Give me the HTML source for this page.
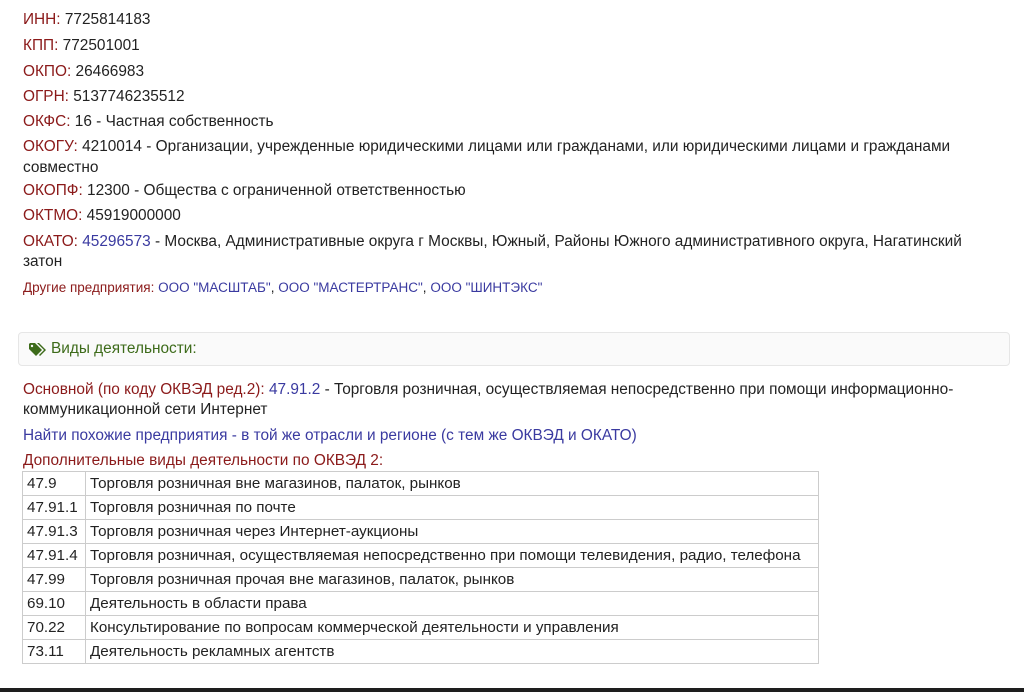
<!DOCTYPE html><html><head><meta charset="utf-8"><style>
body{margin:0;width:1024px;height:692px;overflow:hidden;background:#fff;font-family:"Liberation Sans",Arial,sans-serif;font-size:15.4px;color:#222;position:relative}
.l{position:absolute;left:23px;white-space:nowrap;line-height:20px}
.r{color:#8b1a1a}.b{color:#3a3aa0}.s{font-size:13.5px}
.panel{position:absolute;left:18px;top:332px;width:992px;height:34px;border:1px solid #e6e6e6;border-radius:4px;background:#fafafa;box-sizing:border-box}
.panel span{position:absolute;left:32px;top:7px;color:#3d6b1a}
table{position:absolute;left:22px;top:471px;border-collapse:collapse;width:797px;font-size:15.2px}
td{border:1px solid #ccc;height:23px;padding:0 4px;line-height:22px;white-space:nowrap}
td:first-child{width:54px}
.bar{position:absolute;left:0;top:688px;width:1024px;height:4px;background:#1e1e1e}
</style></head><body>
<div class="l" style="top:10px"><span class="r">ИНН:</span> 7725814183</div>
<div class="l" style="top:36px"><span class="r">КПП:</span> 772501001</div>
<div class="l" style="top:62px"><span class="r">ОКПО:</span> 26466983</div>
<div class="l" style="top:87px"><span class="r">ОГРН:</span> 5137746235512</div>
<div class="l" style="top:112px"><span class="r">ОКФС:</span> 16 - Частная собственность</div>
<div class="l" style="top:137px"><span class="r">ОКОГУ:</span> 4210014 - Организации, учрежденные юридическими лицами или гражданами, или юридическими лицами и гражданами</div>
<div class="l" style="top:158px">совместно</div>
<div class="l" style="top:181px"><span class="r">ОКОПФ:</span> 12300 - Общества с ограниченной ответственностью</div>
<div class="l" style="top:206px"><span class="r">ОКТМО:</span> 45919000000</div>
<div class="l" style="top:232px"><span class="r">ОКАТО:</span> <span class="b">45296573</span> - Москва, Административные округа г Москвы, Южный, Районы Южного административного округа, Нагатинский</div>
<div class="l" style="top:252px">затон</div>
<div class="l s" style="top:278px"><span class="r">Другие предприятия:</span> <span class="b">ООО "МАСШТАБ"</span>, <span class="b">ООО "МАСТЕРТРАНС"</span>, <span class="b">ООО "ШИНТЭКС"</span></div>
<div class="panel"><svg style="position:absolute;left:10px;top:10px" width="18" height="14" viewBox="0 0 18 14"><path d="M0 1V6L7 13L13 7L6 0H1Z" fill="#3d6b1a"/><circle cx="3" cy="3" r="1.2" fill="#fafafa"/><path d="M8 0H10L17 7L11 13L10 12L15 7Z" fill="#3d6b1a"/></svg><span>Виды деятельности:</span></div>
<div class="l" style="top:380px"><span class="r">Основной (по коду ОКВЭД ред.2):</span> <span class="b">47.91.2</span> - Торговля розничная, осуществляемая непосредственно при помощи информационно-</div>
<div class="l" style="top:400px">коммуникационной сети Интернет</div>
<div class="l b" style="top:426px">Найти похожие предприятия - в той же отрасли и регионе (с тем же ОКВЭД и ОКАТО)</div>
<div class="l r" style="top:451px">Дополнительные виды деятельности по ОКВЭД 2:</div>
<table>
<tr><td>47.9</td><td>Торговля розничная вне магазинов, палаток, рынков</td></tr>
<tr><td>47.91.1</td><td>Торговля розничная по почте</td></tr>
<tr><td>47.91.3</td><td>Торговля розничная через Интернет-аукционы</td></tr>
<tr><td>47.91.4</td><td>Торговля розничная, осуществляемая непосредственно при помощи телевидения, радио, телефона</td></tr>
<tr><td>47.99</td><td>Торговля розничная прочая вне магазинов, палаток, рынков</td></tr>
<tr><td>69.10</td><td>Деятельность в области права</td></tr>
<tr><td>70.22</td><td>Консультирование по вопросам коммерческой деятельности и управления</td></tr>
<tr><td>73.11</td><td>Деятельность рекламных агентств</td></tr>
</table>
<div class="bar"></div>
</body></html>
